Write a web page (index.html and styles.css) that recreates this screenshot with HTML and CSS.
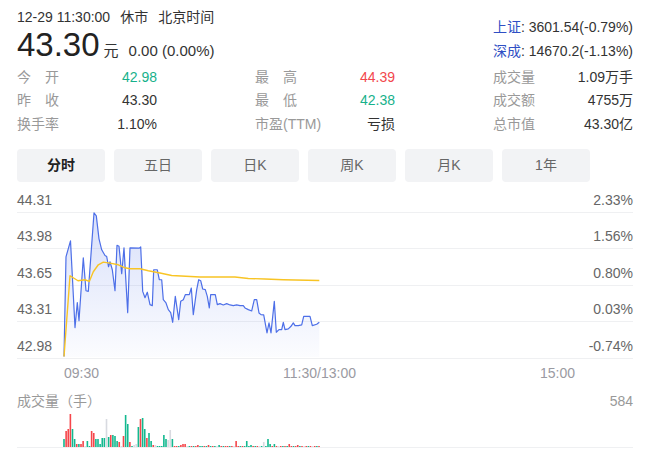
FILE: index.html
```html
<!DOCTYPE html>
<html>
  <head>
    <meta charset="UTF-8" />
    <link rel="stylesheet" href="styles.css">
  </head>

  <body>
    <div class="quote">
      <div class="head">
        <div class="head-left">
          <div class="status">12-29 11:30:00<span class="gap">休市</span><span class="gap">北京时间</span></div>
          <div class="price-row">
            <span class="price">43.30</span><span class="unit">元</span><span class="change">0.00 (0.00%)</span>
          </div>
        </div>
        <div class="indices">
          <div><span class="idx-name">上证</span>: 3601.54(-0.79%)</div>
          <div><span class="idx-name">深成</span>: 14670.2(-1.13%)</div>
        </div>
      </div>

      <div class="stats">
        <div class="stat"><span class="label spread">今开</span><span class="val down">42.98</span></div>
        <div class="stat"><span class="label spread">最高</span><span class="val up">44.39</span></div>
        <div class="stat"><span class="label">成交量</span><span class="val">1.09万手</span></div>
        <div class="stat"><span class="label spread">昨收</span><span class="val">43.30</span></div>
        <div class="stat"><span class="label spread">最低</span><span class="val down">42.38</span></div>
        <div class="stat"><span class="label">成交额</span><span class="val">4755万</span></div>
        <div class="stat"><span class="label">换手率</span><span class="val">1.10%</span></div>
        <div class="stat"><span class="label">市盈(TTM)</span><span class="val">亏损</span></div>
        <div class="stat"><span class="label">总市值</span><span class="val">43.30亿</span></div>
      </div>

      <div class="tabs">
        <div class="tab active">分时</div>
        <div class="tab">五日</div>
        <div class="tab">日K</div>
        <div class="tab">周K</div>
        <div class="tab">月K</div>
        <div class="tab">1年</div>
      </div>

      <div class="plot">
        <div class="grid-row first"><span>44.31</span><span>2.33%</span></div>
        <div class="grid-row"><span>43.98</span><span>1.56%</span></div>
        <div class="grid-row"><span>43.65</span><span>0.80%</span></div>
        <div class="grid-row"><span>43.31</span><span>0.03%</span></div>
        <div class="grid-row"><span>42.98</span><span>-0.74%</span></div>

        <!-- price / average lines drawn in page coordinates -->
        <svg class="lines" viewBox="17 188 616 171" preserveAspectRatio="none">
          <defs>
            <linearGradient id="fill" x1="0" y1="0" x2="0" y2="1">
              <stop offset="0" stop-color="#4d6fe8" stop-opacity="0.22" />
              <stop offset="1" stop-color="#4d6fe8" stop-opacity="0.02" />
            </linearGradient>
          </defs>
          <polygon fill="url(#fill)" points="64,357 66,257 70.5,241 75,328 77.3,303 79,321 83.3,258 86,291 88.3,291.7 94,213 96.3,216 99,239 101.7,250 105,255.7 106.7,256.7 108.5,267 110,262 112.3,270 115,291 117,245.5 119,246.5 121.7,274 124,248 127.7,313 130,248 139.3,248.3 140.7,247 142.7,291.7 145,298 147.3,292.5 150,305 152.3,306 153.7,270 157.3,270 159.3,280 161.7,280 163.3,300 166,303.3 168.3,310 170.7,313 172.7,322.7 175.3,296.7 178.7,320 180.7,301.7 183.3,300 185.3,295 189.3,295 191.3,288.3 193.3,315 196.7,290 198.7,280 200.7,281 202.7,289.3 205.3,290 207.3,296.7 209.3,308.3 210.7,295 215.3,295 217.3,305 220,304 223.3,305.3 226.7,304 230,305.3 233.3,306 236.7,305.3 240,306 243.3,306 245,308.3 248.3,310 251.7,311.3 254.3,300 256.7,300 259,313.3 261,315 263.7,315.3 267,333.3 269,323.3 271,333.3 274.3,301.7 276.3,332.7 279,330 281.7,330 283.3,322.7 285,330 288.3,329.3 291,326.7 293.3,323.3 295,326 298.3,326 301.7,325.3 303.7,316.7 310,316.7 312.3,326 316.7,324.7 319.3,322.7 319.3,357.5 64,357.5" />
          <polyline class="price-line" points="64,357 66,257 70.5,241 75,328 77.3,303 79,321 83.3,258 86,291 88.3,291.7 94,213 96.3,216 99,239 101.7,250 105,255.7 106.7,256.7 108.5,267 110,262 112.3,270 115,291 117,245.5 119,246.5 121.7,274 124,248 127.7,313 130,248 139.3,248.3 140.7,247 142.7,291.7 145,298 147.3,292.5 150,305 152.3,306 153.7,270 157.3,270 159.3,280 161.7,280 163.3,300 166,303.3 168.3,310 170.7,313 172.7,322.7 175.3,296.7 178.7,320 180.7,301.7 183.3,300 185.3,295 189.3,295 191.3,288.3 193.3,315 196.7,290 198.7,280 200.7,281 202.7,289.3 205.3,290 207.3,296.7 209.3,308.3 210.7,295 215.3,295 217.3,305 220,304 223.3,305.3 226.7,304 230,305.3 233.3,306 236.7,305.3 240,306 243.3,306 245,308.3 248.3,310 251.7,311.3 254.3,300 256.7,300 259,313.3 261,315 263.7,315.3 267,333.3 269,323.3 271,333.3 274.3,301.7 276.3,332.7 279,330 281.7,330 283.3,322.7 285,330 288.3,329.3 291,326.7 293.3,323.3 295,326 298.3,326 301.7,325.3 303.7,316.7 310,316.7 312.3,326 316.7,324.7 319.3,322.7" />
          <polyline class="avg-line" points="64,357 70,276 78,281 85,280 89.3,281.7 93.3,272 98.3,265 103.3,262.3 110,263.3 118.3,265 125,268 130,269 140,269 148.3,271 160,273.3 171.7,275.7 200,277.3 235,277.3 248.3,278.7 265,279.3 283.3,280 319.3,280.7" />
        </svg>
      </div>

      <div class="time-axis">
        <span>09:30</span><span>11:30/13:00</span><span>15:00</span>
      </div>

      <div class="vol-head"><span>成交量（手）</span><span>584</span></div>
      <div class="vol-bars">
        <svg id="vol" viewBox="17 409 616 38" preserveAspectRatio="none"></svg>
      </div>
    </div>

    <script>
      // one bar per minute, colour letter + height in px
      const volumes = (
        'g8 r16 r18 r33 g18 g8 r3 g3 r3 r6 s1 g6 g1 r16 r14 g8 g8 g3 g9 g9 ' +
        's28 g10 r12 g12 g11 g6 r5 s1 r11 g32 g23 r5 g1 s2 s3 g20 r28 g29 g18 r9 ' +
        'g14 g6 r2 s2 g1 g1 g1 g12 g8 s7 s17 g8 r1 r1 g1 r2 r3 r3 s1 g1 ' +
        'r1 g1 r1 r2 g1 g1 r1 g1 r2 g1 r1 g1 s1 g2 r1 g1 r1 r1 g1 r1 ' +
        's1 r6 r1 g1 r1 g1 g6 g1 g2 r1 g1 r1 s1 g1 s5 g1 g8 g3 r1 g3 ' +
        'r1 s1 r1 g1 r1 g1 r3 r1 g1 r1 r2 g1 r1 s1 r1 g1 r1 s1 r1 g1 r1'
      ).split(' ');
      const colors = { r: '#f5464b', g: '#13b990', s: '#d8dae0' };
      const vol = document.getElementById('vol');

      volumes.forEach((v, i) => {
        const h = Number.parseFloat(v.slice(1));
        const rect = document.createElementNS('http://www.w3.org/2000/svg', 'rect');
        rect.setAttribute('x', 64 + i * 2.125 - 0.8);
        rect.setAttribute('y', 447 - h);
        rect.setAttribute('width', 1.6);
        rect.setAttribute('height', h);
        rect.setAttribute('fill', colors[v[0]]);
        vol.appendChild(rect);
      });
    </script>
  </body>
</html>
```

FILE: styles.css
```css
body {
  margin: 0;
  background: white;
  color: #333;
  font-family: "Liberation Sans", "Noto Sans CJK SC", sans-serif;
}
.quote {
  width: 616px;
  padding: 7px 0 0 17px;
}

.head {
  display: flex;
  justify-content: space-between;
}
.status {
  font-size: 14px;
  line-height: 20px;
  color: #333;
}
.status .gap {
  margin-left: 10px;
}
.price-row {
  height: 36px;
  line-height: 36px;
  white-space: nowrap;
}
.price {
  font-size: 33px;
  color: #222;
}
.unit {
  font-size: 15px;
  margin-left: 4px;
}
.change {
  font-size: 15px;
  margin-left: 10px;
}
.indices {
  margin-top: 9px;
  font-size: 14px;
  line-height: 23.5px;
  text-align: right;
  color: #333;
}
.idx-name {
  color: #2f4fc4;
}

.stats {
  display: grid;
  grid-template-columns: 140px 140px 140px;
  justify-content: space-between;
  margin-top: 3px;
  font-size: 14px;
  line-height: 23.4px;
}
.stat {
  display: flex;
  justify-content: space-between;
}
.label {
  color: #999;
}
.spread {
  display: inline-block;
  width: 42px;
  text-align: justify;
  text-align-last: justify;
}
.val {
  color: #333;
}
.val.up {
  color: #f2474d;
}
.val.down {
  color: #17b18b;
}

.tabs {
  display: flex;
  gap: 9px;
  margin-top: 13px;
}
.tab {
  width: 88px;
  height: 33px;
  line-height: 33px;
  text-align: center;
  border-radius: 4px;
  background: #f2f3f5;
  font-size: 14px;
  color: #666;
}
.tab.active {
  color: #222;
  font-weight: bold;
}

.plot {
  position: relative;
  margin-top: 6px;
}
.grid-row {
  box-sizing: border-box;
  height: 36.5px;
  display: flex;
  justify-content: space-between;
  align-items: flex-end;
  padding-bottom: 4px;
  border-bottom: 1px solid #eff0f2;
  font-size: 14px;
  line-height: 16px;
  color: #666;
}
.grid-row.first {
  height: 24.5px;
}
.lines {
  position: absolute;
  left: 0;
  top: 0;
  width: 100%;
  height: 100%;
}
.price-line {
  fill: none;
  stroke: #4d6fe8;
  stroke-width: 1.2;
  stroke-linejoin: round;
}
.avg-line {
  fill: none;
  stroke: #f8c424;
  stroke-width: 1.4;
  stroke-linejoin: round;
}

.time-axis {
  width: 511px;
  margin: 6px 0 0 47px;
  display: flex;
  justify-content: space-between;
  font-size: 14px;
  line-height: 16px;
  color: #9a9aa2;
}

.vol-head {
  display: flex;
  justify-content: space-between;
  margin-top: 12.5px;
  font-size: 14px;
  line-height: 16px;
  color: #999;
}
.vol-bars {
  height: 38px;
  border-bottom: 1px solid #eff0f2;
}
.vol-bars svg {
  display: block;
  width: 100%;
  height: 100%;
}
```
